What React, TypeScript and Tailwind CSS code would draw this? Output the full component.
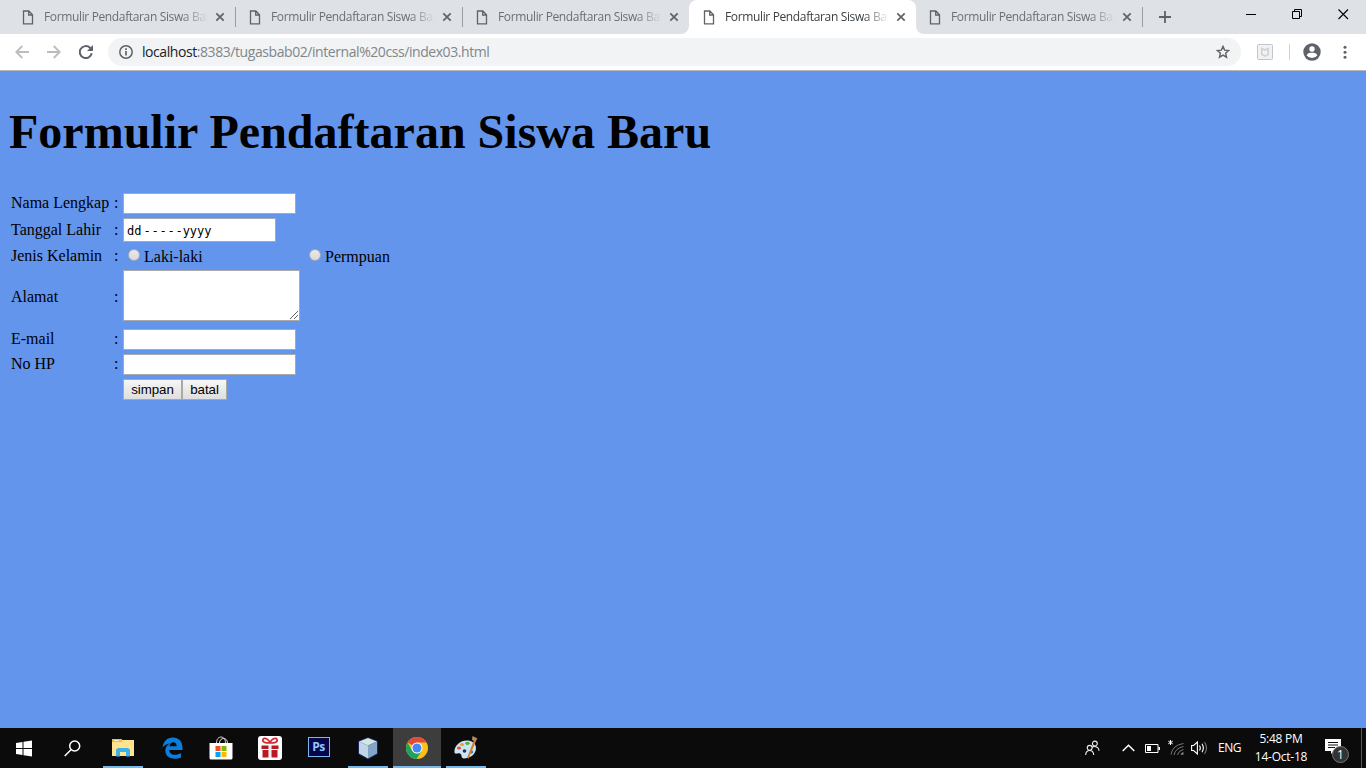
import React from "react";

const ui = "font-['Open_Sans','Noto_Sans',sans-serif]";

function Tab({ active = false, separator = false }: { active?: boolean; separator?: boolean }) {
  return (
    <div className={`relative flex h-[34px] w-[227px] shrink-0 items-center ${active ? "rounded-t-lg bg-white text-[#3c4043]" : "text-[#6b6f74]"}`}>
      {active && (
        <>
          <span className="absolute bottom-0 -left-2 h-2 w-2 bg-white"><span className="block h-2 w-2 rounded-br-lg bg-[#dee1e6]" /></span>
          <span className="absolute -right-2 bottom-0 h-2 w-2 bg-white"><span className="block h-2 w-2 rounded-bl-lg bg-[#dee1e6]" /></span>
        </>
      )}
      <svg className="ml-[14px] shrink-0" width="12" height="15" viewBox="0 0 12 15" fill="none" stroke="#5f6368" strokeWidth="1.3">
        <path d="M1.5 1h5.3L10.500 4.700V13.800h-9zM6.700 1v4h3.800" />
      </svg>
      <span className="ml-[10px] w-[163px] overflow-hidden whitespace-nowrap text-[12px] tracking-[-0.36px] [mask-image:linear-gradient(to_right,black_138px,transparent_164px)]">
        Formulir Pendaftaran Siswa Baru
      </span>
      <svg className="ml-[8px] shrink-0" width="10" height="10" viewBox="0 0 10 10" stroke="#5f6368" strokeWidth="1.7">
        <path d="M1.300 1.300l7.400 7.400M8.700 1.300l-7.400 7.400" />
      </svg>
      {separator && <span className="absolute -right-px top-[7px] h-5 w-px bg-[#9a9da1]" />}
    </div>
  );
}

function TabStrip() {
  return (
    <div className="flex h-[34px] bg-[#dee1e6] pl-2">
      <Tab separator />
      <Tab separator />
      <Tab />
      <Tab active />
      <div className="-ml-px"><Tab separator /></div>
      <div className="flex flex-1 items-start">
        <svg className="mt-[11px] ml-[17px]" width="12" height="12" viewBox="0 0 12 12" stroke="#5f6368" strokeWidth="1.8"><path d="M6 0v12M0 6h12" /></svg>
        <svg className="mt-[14px] ml-[75px]" width="10" height="1"><path d="M0 .5h10" stroke="#000" /></svg>
        <svg className="mt-[9px] ml-[36px]" width="11" height="11" viewBox="0 0 11 11" fill="none" stroke="#000"><path d="M.5 2.500h7v7h-7zM2.500 2.500v-2h7v7h-2" /></svg>
        <svg className="mt-[9px] ml-[35px]" width="11" height="11" viewBox="0 0 11 11" stroke="#000" strokeWidth="1.100"><path d="M.5.5l9.500 9.500M10 .5L.5 10" /></svg>
      </div>
    </div>
  );
}

function Toolbar() {
  return (
    <div className="flex h-[37px] items-center border-b border-[#b4b7bb] bg-white pl-[15px]">
      <svg width="14" height="14" viewBox="0 0 14 14" fill="none" stroke="#babcbe" strokeWidth="1.8"><path d="M14 7H1.500M7.300 1L1.300 7l6 6" /></svg>
      <svg className="ml-[18px]" width="14" height="14" viewBox="0 0 14 14" fill="none" stroke="#babcbe" strokeWidth="1.8"><path d="M0 7h12.500M6.700 1l6 6-6 6" /></svg>
      <svg className="ml-[18px]" width="14" height="14" viewBox="0 0 14 14" fill="none"><path d="M12.700 8.200A6 6 0 1 1 11 2.800l1 1" stroke="#5f6368" strokeWidth="2" /><path d="M14 0v6H8z" fill="#5f6368" /></svg>
      <div className="ml-[15px] flex h-7 w-[1133px] items-center rounded-full bg-[#f1f3f4] pl-[11px]">
        <svg width="14" height="14" viewBox="0 0 14 14" fill="none" stroke="#5f6368" strokeWidth="1.5"><circle cx="7" cy="7" r="6.200" /><path d="M7 6v4.500M7 3.300v1.600" strokeWidth="1.700" /></svg>
        <span className="ml-[9px] w-[1069px] whitespace-nowrap text-[14px] leading-5 text-[#80868b] tracking-[-0.43px]"><span className="text-[#202124]">localhost</span>:8383/tugasbab02/internal%20css/index03.html</span>
        <svg className="ml-[5px] shrink-0" width="14" height="14" viewBox="0 0 14 14" fill="none" stroke="#5f6368" strokeWidth="1.400"><path d="M7 1.400l1.600 3.700 4 .4-3 2.700.9 4L7 10.100l-3.500 2.100.9-4-3-2.700 4-.4z" /></svg>
      </div>
      <svg className="ml-[16px]" width="16" height="16" viewBox="0 0 16 16" fill="none"><rect x=".5" y=".5" width="15" height="15" rx="1" fill="#f1f2f3" stroke="#c0c5c9" /><path d="M4.800 4.500v6L8 12l3.200-1.500v-6L8 6z" stroke="#d0d3d5" strokeWidth="1.700" /></svg>
      <span className="ml-[16px] h-4 w-px bg-[#cfd1d3]" />
      <svg className="ml-[13px]" width="18" height="18" viewBox="0 0 18 18"><circle cx="9" cy="9" r="8.700" fill="#5f6368" /><circle cx="9" cy="6" r="2.700" fill="#fff" /><path d="M3.600 12.200C5 9.900 7 9.800 9 9.800s4 .1 5.400 2.400A6.500 6.500 0 0 1 9 15a6.500 6.500 0 0 1-5.400-2.800z" fill="#fff" /></svg>
      <svg className="ml-[22px]" width="4" height="14" viewBox="0 0 4 14" fill="#5f6368"><circle cx="2" cy="2.200" r="1.500" /><circle cx="2" cy="7.200" r="1.500" /><circle cx="2" cy="12.200" r="1.500" /></svg>
    </div>
  );
}

const field = "block h-[21px] w-[173px] border border-[#a9a9a9] bg-white outline-none";
const button = "h-[21px] border border-[#a9a9a9] bg-linear-to-b from-[#f6f6f6] to-[#dedede] font-['Liberation_Sans',sans-serif] text-[13.333px] leading-[19px] tracking-[-0.05px] text-black";

function Row({ label, className, raised = false, children }: { label?: string; className: string; raised?: boolean; children: React.ReactNode }) {
  return (
    <div className={`flex items-center ${className}`}>
      <span className={`w-[103px] whitespace-nowrap ${raised ? "pb-[2px]" : ""}`}>{label}</span>
      <span className={`w-[9px] ${raised ? "pb-[2px]" : ""}`}>{label ? ":" : ""}</span>
      {children}
    </div>
  );
}

function Radio({ label, className }: { label: string; className: string }) {
  return (
    <label className={`flex items-center ${className}`}>
      <input type="radio" name="jk" className="mb-[3px] h-3 w-3 appearance-none rounded-full border border-[#aaa] bg-linear-to-b from-[#e9e9e9] to-[#dadada]" />
      <span className="ml-[4px]">{label}</span>
    </label>
  );
}

function Page() {
  return (
    <main className="h-[657px] bg-[#6495ed] pt-[33px] pl-[8px] font-['Liberation_Serif',serif] text-black">
      <h1 className="h-[89px] whitespace-nowrap pl-px text-[48px] leading-[55px] font-bold tracking-[0.01px]">Formulir Pendaftaran Siswa Baru</h1>
      <form className="pl-[3px] text-[16px] leading-[18px]">
        <Row raised label="Nama Lengkap" className="h-[21px]"><input className={field} /></Row>
        <Row label="Tanggal Lahir" className="mt-[4px] h-[24px]">
          <div className="flex h-6 w-[153px] items-center whitespace-pre border border-[#a9a9a9] bg-white pt-[2px] pl-[3px] font-['DejaVu_Sans_Mono',monospace] text-[12px] tracking-[0.02px]">
            <span className="mr-[2px]">dd</span><span className="mr-[-1px] tracking-[0.8px]">-----</span><span>yyyy</span>
          </div>
        </Row>
        <Row label="Jenis Kelamin" className="mt-[2px] h-[24px]">
          <Radio label="Laki-laki" className="mt-px ml-[5px] w-[181px]" />
          <Radio label="Permpuan" className="mt-px" />
        </Row>
        <Row raised label="Alamat" className="mt-[2px] h-[55px]">
          <div className="relative mb-[4px] h-[51px] w-[177px]">
            <textarea className="block h-full w-full resize-none border border-[#a9a9a9] bg-white outline-none" />
            <svg className="absolute right-[2px] bottom-[2px]" width="8" height="8" viewBox="0 0 8 8" stroke="#555" strokeWidth=".9"><path d="M0 8l8-8M4 8l4-4" /></svg>
          </div>
        </Row>
        <Row raised label="E-mail" className="mt-[4px] h-[21px]"><input className={field} /></Row>
        <Row raised label="No HP" className="mt-[4px] h-[21px]"><input className={field} /></Row>
        <Row className="mt-[4px] h-[21px]">
          <button type="button" className={`w-[59px] ${button}`}>simpan</button>
          <button type="button" className={`w-[45px] ${button}`}>batal</button>
        </Row>
      </form>
    </main>
  );
}

function TaskItem({ children, className, open = false }: { children: React.ReactNode; className: string; open?: boolean }) {
  return <div className={`flex h-10 shrink-0 items-center justify-center ${open ? "border-b-2 border-[#76b9ed] pt-[2px]" : ""} ${className}`}>{children}</div>;
}

function Taskbar() {
  return (
    <footer className={`flex h-10 bg-[#0b0b0b] text-white ${ui}`}>
      <TaskItem className="w-[48px]"><svg width="16" height="17" viewBox="0 0 16 17" fill="#fff"><path d="M0 3l6.500-1v6H0zM7.500 1.800L16 .5V8H7.500zM0 9h6.500v6L0 14zM7.500 9H16v7.500l-8.500-1.300z" /></svg></TaskItem>
      <TaskItem className="w-[48px]"><svg width="17" height="17" viewBox="0 0 17 17" fill="none" stroke="#fff" strokeWidth="1.500"><circle cx="10.700" cy="6" r="5" /><path d="M7.200 9.500L.7 16" /></svg></TaskItem>
      <TaskItem open className="ml-[7px] w-[40px] pb-[2px]">
        <svg width="22" height="19" viewBox="0 0 22 19"><path d="M0 1h8l2 1h12v16H0z" fill="#ffe391" /><path d="M0 1h10v3H0z" fill="#f5bd2b" /><path d="M2 2h5v1H2z" fill="#fff3c4" /><path d="M4 18.500v-7L6 10h10l2 1.500v7h-4V14H8v4.500z" fill="#3bb2e8" /></svg>
      </TaskItem>
      <TaskItem className="ml-[5px] w-[49px] pr-px">
        <svg width="21" height="22" viewBox="0 0 21 22" fill="#0c7ddb"><path d="M.5 10.500C1.200 4.600 5.200.5 10.800.5c6.200 0 9.700 4.300 9.700 10v2.400H7.300c.2 5.500 7.300 6.200 11.700 3.200v4.400C13.200 23.300 3.300 22 3.300 13.600c0-3.300 1.700-5.700 4.600-7.200C4.800 6.800 2.300 8 .5 10.500zM7.400 9.300h7.300c0-5.500-6.500-5-7.300 0z" /></svg>
      </TaskItem>
      <TaskItem className="w-[48px] pr-px pb-px">
        <svg width="24" height="24" viewBox="0 0 24 24"><path d="M7.500 7C7.500-1 16.500-1 16.500 7M10.500 7c0-6 8-6 8 0" fill="none" stroke="#ddd" /><path d="M.5 7h23v15q0 1.500-1.500 1.500H2Q.5 23.500.5 22z" fill="#fff" /><path d="M6.500 10h5v5h-5z" fill="#f05022" /><path d="M12.500 10h5v5h-5z" fill="#7fba00" /><path d="M6.500 16h5v5h-5z" fill="#00a4ef" /><path d="M12.500 16h5v5h-5z" fill="#ffb900" /></svg>
      </TaskItem>
      <TaskItem className="w-[49px]">
        <svg width="24" height="24" viewBox="0 0 24 24"><rect width="24" height="24" rx="3" fill="#fff" /><path d="M3.500 9.500h7V13h-7zM13.500 9.500h7V13h-7zM4.500 14h6v7.500h-6zM13.500 14h6v7.500h-6z" fill="#b61b24" /><path d="M12 7C7 7 4 6 5 3.500S11 3 12 7c1-4 6-6 7-3.500S17 7 12 7z" fill="none" stroke="#d32832" strokeWidth="1.700" /><path d="M11 9.500h2v12h-2z" fill="#eee" /></svg>
      </TaskItem>
      <TaskItem className="w-[49px] pb-[3px]"><div className="flex h-[20px] w-[22px] items-center justify-center border border-[#7cb7f2] bg-[#06064c] text-[12px] font-bold tracking-[-0.5px] text-[#8fc7ff]">Ps</div></TaskItem>
      <TaskItem open className="ml-[5px] w-[40px]">
        <svg width="24" height="24" viewBox="0 0 24 24"><path d="M12 1L22 5v13l-10 5.500L2 18V5z" fill="#20275f" /><path d="M12 2l9 3.500-9 4-9-4z" fill="#d3e7e3" /><path d="M3 5.500l9 4v13l-9-5z" fill="#c2d5e6" /><path d="M21 5.500l-9 4v13l9-5z" fill="#83a6c8" /></svg>
      </TaskItem>
      <TaskItem open className="ml-[5px] w-[48px] bg-[#3d3d3d]">
        <svg width="22" height="22" viewBox="0 0 22 22"><circle cx="11" cy="11" r="11" fill="#fbc116" /><path d="M11 11L1.500 5.500A11 11 0 0 1 20.500 5.500H11z" fill="#dd4b3e" /><path d="M1.500 5.500L6.200 13.800 11 16.500 15.800 13.800 10.500 22A11 11 0 0 1 1.500 5.500z" fill="#1da261" /><circle cx="11" cy="11" r="5.500" fill="#fff" /><circle cx="11" cy="11" r="4.500" fill="#4587f3" /></svg>
      </TaskItem>
      <TaskItem open className="ml-[5px] w-[40px]">
        <svg width="24" height="24" viewBox="0 0 24 24"><path d="M4.500 7.500C10 2 22 4 22 12c0 7-7 10.500-12 10.500-3.500 0-1.500-4-4-5s-5 1.500-5.500-1C0 13 1.500 10 4.500 7.500z" fill="#cce4f2" /><ellipse cx="5" cy="12" rx="2" ry="1.600" fill="#dc4f36" /><ellipse cx="8" cy="8.500" rx="2" ry="1.600" fill="#e8a229" /><ellipse cx="13.500" cy="7.300" rx="2.200" ry="1.600" fill="#55ae3e" /><circle cx="10.500" cy="15" r="1.800" fill="#193a57" /><circle cx="17.500" cy="16" r="1.700" fill="#3685cb" /><path d="M20 4l-7 18 1.500.7L22 5z" fill="#d97921" /><path d="M18.500 0l5 2.500-2 3-3.500-1.500z" fill="#b88a5c" /></svg>
      </TaskItem>
      <div className="ml-auto flex h-10 items-center">
        <svg width="15" height="16" viewBox="0 0 16 16" fill="none" stroke="#eee" strokeWidth="1.200"><circle cx="10.500" cy="3.200" r="2.600" /><path d="M8.700 6.500Q14.500 6 15 11M8.500 6.300L8 7.500" /><circle cx="5" cy="7.800" r="2.600" /><path d="M.7 15.500c.4-6.500 8.200-6.500 8.600 0" /></svg>
        <svg className="ml-[22px]" width="13" height="8" viewBox="0 0 13 8" fill="none" stroke="#fff" strokeWidth="1.500"><path d="M.7 7l5.800-5.800L12.300 7" /></svg>
        <svg className="ml-[10px]" width="15" height="9" viewBox="0 0 15 9"><path d="M.5.500h12.500v8H.5z" fill="none" stroke="#fff" /><path d="M2 2h4v5H2zM13.500 3H15v3h-1.500z" fill="#fff" /></svg>
        <svg className="ml-[8px] mb-[1px]" width="17" height="17" viewBox="0 0 17 17" fill="none"><path d="M2.500 1v5M.3 2.200l4.400 2.600M4.700 2.200L.3 4.800" stroke="#fff" strokeWidth="1" /><path d="M3 15.500Q4.500 6 15.500 4.500M6 16q1.500-7 9.500-8.500M9.500 16q1-4.500 6-5.500" stroke="#777" /><path d="M12.500 15.800q.5-2.300 3-2.800v2.800z" fill="#888" /></svg>
        <svg className="ml-[6px]" width="17" height="14" viewBox="0 0 17 14" fill="none" stroke="#fff" strokeWidth="1.100"><path d="M.6 4.500h2L6.400 1v12L2.600 9.500h-2z" /><path d="M8.500 4.500q1.700 2.500 0 5M11 2.800q2.700 4.200 0 8.400" /><path d="M13.500 1q4 6 0 12" stroke="#777" /></svg>
        <span className="ml-[10px] w-[24px] whitespace-nowrap text-[12px] tracking-[-0.5px]">ENG</span>
        <div className="ml-[5px] w-[68px] text-center text-[12px] leading-[18px] tracking-[-0.25px] whitespace-nowrap"><div>5:48 PM</div><div>14-Oct-18</div></div>
        <div className="relative ml-[9px] h-[26px] w-[26px]">
          <svg className="absolute top-[4px] left-[1px]" width="16" height="16" viewBox="0 0 16 16"><path d="M0 0h16v12H9l-3 3v-3H0z" fill="#fff" /><path d="M3 3.500h10M3 6h10M3 8.500h7" stroke="#111" /></svg>
          <span className="absolute top-[11px] left-[8px] flex h-[17px] w-[17px] items-center justify-center rounded-full border border-[#777] bg-[#333] text-[12px]">1</span>
        </div>
        <span className="ml-[11px] h-10 w-px bg-[#555]" />
        <span className="w-[4px]" />
      </div>
    </footer>
  );
}

export default function App() {
  return (
    <div className={`h-[768px] w-[1366px] overflow-hidden ${ui}`}>
      <TabStrip />
      <Toolbar />
      <Page />
      <Taskbar />
    </div>
  );
}
